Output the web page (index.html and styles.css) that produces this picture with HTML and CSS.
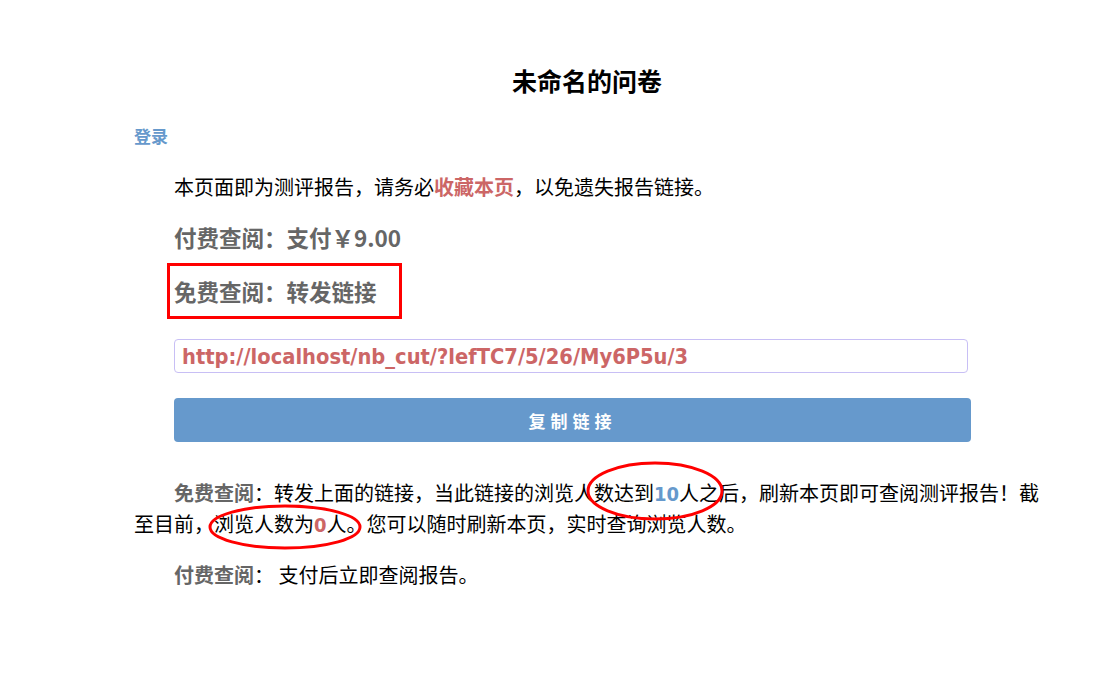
FILE: index.html
```html
<!DOCTYPE html>
<html lang="zh-CN">
<head>
    <meta charset="UTF-8">
    <meta name="viewport" content="width=device-width, initial-scale=1.0">
    <title>未命名的问卷</title>
    <link rel="stylesheet" href="styles.css">
</head>
<body>
    <div class="container">
        <h1 class="title">未命名的问卷</h1>
        <a class="login" href="#">登录</a>
        <p class="notice">本页面即为测评报告，请务必<span class="red">收藏本页</span>，以免遗失报告链接。</p>
        <div class="price">付费查阅：支付￥9.00</div>
        <div class="price">免费查阅：转发链接</div>
        <div class="share-box">
            <input id="share-link" class="share-input" type="text" value="http://localhost/nb_cut/?lefTC7/5/26/My6P5u/3" readonly>
            <button class="copy-btn">复制链接</button>
        </div>
        <p class="desc"><span class="label">免费查阅</span>：转发上面的链接，当此链接的浏览人数达到<span class="num blue">10</span>人之后，刷新本页即可查阅测评报告！截至目前，浏览人数为<span class="num red">0</span>人。您可以随时刷新本页，实时查询浏览人数。</p>
        <p class="desc"><span class="label">付费查阅</span>： 支付后立即查阅报告。</p>
    </div>

    <!-- annotations drawn over the screenshot -->
    <div class="mark-box"></div>
    <svg class="marks" width="1101" height="685" viewBox="0 0 1101 685">
        <ellipse cx="655" cy="491" rx="67" ry="28" fill="none" stroke="#f00" stroke-width="3"/>
        <ellipse cx="285" cy="527" rx="75" ry="21" fill="none" stroke="#f00" stroke-width="3"/>
    </svg>
</body>
</html>
```

FILE: styles.css
```css
* {
    margin: 0;
    padding: 0;
    box-sizing: border-box;
}
body {
    font-family: "Noto Sans CJK SC", sans-serif;
    background: #fff;
    color: #000;
}
.container {
    width: 906px;
    margin-left: 134px;
    padding-top: 62px;
}
.title {
    text-align: center;
    font-size: 25px;
    line-height: 36px;
    font-weight: bold;
}
.login {
    display: block;
    margin-top: 26px;
    color: #6699cc;
    font-size: 17px;
    line-height: 24px;
    font-weight: bold;
    text-decoration: none;
}
.notice {
    margin-top: 25px;
    padding-left: 40px;
    font-size: 20px;
    line-height: 28px;
}
.red {
    color: #cc6666;
    font-weight: bold;
}
.blue {
    color: #6699cc;
    font-weight: bold;
}
.price {
    padding-left: 40px;
    color: #666;
    font-size: 22.5px;
    font-weight: bold;
    line-height: 32px;
    margin-top: 22px;
}
.notice + .price {
    margin-top: 20px;
}
.share-box {
    padding-left: 40px;
    margin-top: 32px;
    width: 837px;
}
.share-input {
    display: block;
    width: 794px;
    height: 34px;
    padding: 0 7px;
    border: 1px solid #c8bff5;
    border-radius: 4px;
    font-family: "DejaVu Sans Condensed", "DejaVu Sans", sans-serif;
    font-size: 21.7px;
    font-weight: bold;
    color: #cc6666;
    outline: none;
}
.copy-btn {
    display: block;
    width: 797px;
    height: 44px;
    margin-top: 25px;
    border: none;
    border-radius: 4px;
    background: #6699cc;
    color: #fff;
    font-family: "Noto Sans CJK SC", sans-serif;
    font-size: 17px;
    font-weight: bold;
    letter-spacing: 5px;
}
.desc {
    text-indent: 40px;
    font-size: 20px;
    line-height: 30px;
    margin-top: 36px;
}
.desc + .desc {
    margin-top: 20px;
}
.label {
    color: #666;
    font-weight: bold;
}
.num {
    font-family: "DejaVu Sans Condensed", "DejaVu Sans", sans-serif;
}
.mark-box {
    position: absolute;
    left: 167px;
    top: 263px;
    width: 235px;
    height: 56px;
    border: 3px solid #f00;
}
.marks {
    position: absolute;
    left: 0;
    top: 0;
    pointer-events: none;
}
```
